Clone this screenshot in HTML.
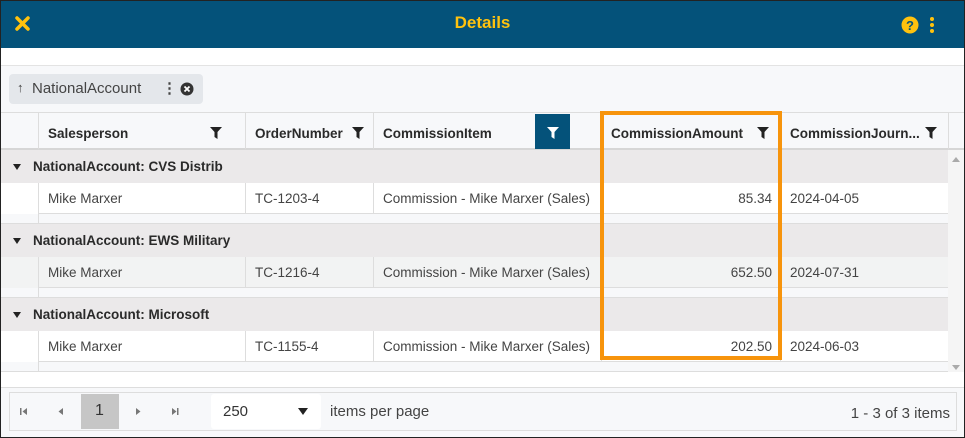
<!DOCTYPE html><html><head><style>
*{box-sizing:border-box;margin:0;padding:0}
body{width:965px;height:438px;overflow:hidden;font-family:"Liberation Sans",sans-serif;background:#fff;position:relative}
.a{position:absolute}
.frame{left:0;top:0;width:965px;height:438px;border:1px solid #222;}
.hdr{left:1px;top:1px;width:963px;height:47px;background:#04527a}
.title{left:0;width:965px;top:13px;text-align:center;color:#ffc20e;font-weight:bold;font-size:17px}
.tb{left:1px;top:65px;width:963px;height:47px;background:#f7f8fa;border-top:1px solid #e3e3e3}
.chip{left:9px;top:74px;width:194px;height:30px;background:#e4e7eb;border-radius:4px;font-size:15px;color:#444}
.th{top:112px;height:38px;background:#f7f8fa;border-top:1px solid #ddd;border-bottom:2px solid #d6d6d6;border-left:1px solid #ddd;font-weight:bold;font-size:13.5px;color:#2a2a2a;padding:13px 0 0 9px;white-space:nowrap}
.f{position:absolute;top:13px}
.g{left:1px;width:947px;height:33px;background:#ebe9ea;font-weight:bold;font-size:13.5px;color:#2a2a2a}
.tri{position:absolute;left:12px;top:14px;width:0;height:0;border-left:4px solid transparent;border-right:4px solid transparent;border-top:6px solid #222}
.d{height:31px;border-left:1px solid #ddd;border-bottom:1px solid #ddd;font-size:13.5px;color:#444;padding:8px 0 0 9px;white-space:nowrap}
.ft{left:1px;width:947px;height:10px;background:#f7f8fa;border-bottom:1px solid #ddd}
</style></head><body>
<div class="a frame"></div>
<div class="a hdr"></div>
<svg class="a" style="left:14px;top:15px" width="17" height="17" viewBox="0 0 17 17"><path d="M3 3L14 14M14 3L3 14" stroke="#ffc20e" stroke-width="3.5" stroke-linecap="round"/></svg>
<div class="a title">Details</div>
<svg class="a" style="left:900px;top:15px" width="40" height="20"><circle cx="10" cy="10" r="8.5" fill="#ffc20e"/><text x="10" y="15" text-anchor="middle" font-family="Liberation Sans" font-weight="bold" font-size="13" fill="#04527a">?</text><circle cx="32" cy="4" r="2" fill="#ffc20e"/><circle cx="32" cy="10" r="2" fill="#ffc20e"/><circle cx="32" cy="16" r="2" fill="#ffc20e"/></svg>
<div class="a tb"></div>
<div class="a chip"><span class="a" style="left:8px;top:6px;font-size:13px">↑</span><span class="a" style="left:23px;top:6px">NationalAccount</span><span class="a" style="left:153px;top:5px;font-weight:bold">⋮</span><svg class="a" style="left:171px;top:8px" width="14" height="14"><circle cx="7" cy="7" r="6.5" fill="#333"/><path d="M4.5 4.5L9.5 9.5M9.5 4.5L4.5 9.5" stroke="#fff" stroke-width="1.8"/></svg></div>

<div class="a th" style="left:1px;width:37px;border-left:none"></div>
<div class="a th" style="left:38px;width:207px">Salesperson<svg class="f" style="left:170px" width="14" height="14"><path d="M1 1H13L8.5 6V13L5.5 11V6Z" fill="#222"/></svg></div>
<div class="a th" style="left:245px;width:128px">OrderNumber<svg class="f" style="left:105px" width="14" height="14"><path d="M1 1H13L8.5 6V13L5.5 11V6Z" fill="#222"/></svg></div>
<div class="a th" style="left:373px;width:228px">CommissionItem<div class="a" style="left:161px;top:1px;width:35px;height:35px;background:#04527a"></div><svg class="f" style="left:172px" width="14" height="14"><path d="M1 1H13L8.5 6V13L5.5 11V6Z" fill="#fff"/></svg></div>
<div class="a th" style="left:601px;width:179px">CommissionAmount<svg class="f" style="left:154px" width="14" height="14"><path d="M1 1H13L8.5 6V13L5.5 11V6Z" fill="#222"/></svg></div>
<div class="a th" style="left:780px;width:168px">CommissionJourn...<svg class="f" style="left:143px" width="14" height="14"><path d="M1 1H13L8.5 6V13L5.5 11V6Z" fill="#222"/></svg></div>
<div class="a th" style="left:948px;width:16px;padding:0"></div>

<div class="a" style="left:948px;top:150px;width:16px;height:222px;background:#f5f5f5"></div>
<div class="a" style="left:952px;top:157px;width:0;height:0;border-left:4px solid transparent;border-right:4px solid transparent;border-bottom:5px solid #aaa"></div>
<div class="a" style="left:952px;top:365px;width:0;height:0;border-left:4px solid transparent;border-right:4px solid transparent;border-top:5px solid #aaa"></div>

<!-- group 1 -->
<div class="a g" style="top:150px"><span class="tri"></span><span class="a" style="left:32px;top:9px">NationalAccount: CVS Distrib</span></div>
<div class="a" style="left:1px;top:183px;width:947px;height:31px;background:#fff"></div>
<div class="a d" style="left:38px;top:183px;width:207px">Mike Marxer</div>
<div class="a d" style="left:245px;top:183px;width:128px">TC-1203-4</div>
<div class="a d" style="left:373px;top:183px;width:228px">Commission - Mike Marxer (Sales)</div>
<div class="a d" style="left:601px;top:183px;width:179px;text-align:right;padding-right:8px">85.34</div>
<div class="a d" style="left:780px;top:183px;width:168px">2024-04-05</div>
<div class="a ft" style="top:214px"></div><div class="a" style="left:38px;top:214px;width:1px;height:10px;background:#ddd"></div>

<!-- group 2 -->
<div class="a g" style="top:224px"><span class="tri"></span><span class="a" style="left:32px;top:9px">NationalAccount: EWS Military</span></div>
<div class="a" style="left:1px;top:257px;width:947px;height:31px;background:#f2f3f3"></div>
<div class="a d" style="left:38px;top:257px;width:207px">Mike Marxer</div>
<div class="a d" style="left:245px;top:257px;width:128px">TC-1216-4</div>
<div class="a d" style="left:373px;top:257px;width:228px">Commission - Mike Marxer (Sales)</div>
<div class="a d" style="left:601px;top:257px;width:179px;text-align:right;padding-right:8px">652.50</div>
<div class="a d" style="left:780px;top:257px;width:168px">2024-07-31</div>
<div class="a ft" style="top:288px"></div><div class="a" style="left:38px;top:288px;width:1px;height:10px;background:#ddd"></div>

<!-- group 3 -->
<div class="a g" style="top:298px"><span class="tri"></span><span class="a" style="left:32px;top:9px">NationalAccount: Microsoft</span></div>
<div class="a" style="left:1px;top:331px;width:947px;height:31px;background:#fff"></div>
<div class="a d" style="left:38px;top:331px;width:207px">Mike Marxer</div>
<div class="a d" style="left:245px;top:331px;width:128px">TC-1155-4</div>
<div class="a d" style="left:373px;top:331px;width:228px">Commission - Mike Marxer (Sales)</div>
<div class="a d" style="left:601px;top:331px;width:179px;text-align:right;padding-right:8px">202.50</div>
<div class="a d" style="left:780px;top:331px;width:168px">2024-06-03</div>
<div class="a ft" style="top:362px"></div><div class="a" style="left:38px;top:362px;width:1px;height:10px;background:#ddd"></div>

<!-- orange highlight -->
<div class="a" style="left:600px;top:111px;width:182px;height:249px;border:4.5px solid #f7940c"></div>

<!-- pager -->
<div class="a" style="left:1px;top:387px;width:963px;height:50px;background:#f7f8fa;border-top:1px solid #ddd"></div>
<div class="a" style="left:9px;top:392px;width:948px;height:39px;border:1px solid #ddd;background:#f7f8fa"></div>
<div class="a" style="left:81px;top:394px;width:38px;height:35px;background:#c6c6c6"></div>
<div class="a" style="left:95px;top:402px;font-size:16px;color:#333">1</div>
<svg class="a" style="left:18px;top:407px" width="180" height="10" fill="#777"><rect x="2" y="1" width="1.5" height="7"/><path d="M9 1V8L4.5 4.5Z"/><path d="M45 1V8L40.5 4.5Z"/><path d="M118 1V8L122.5 4.5Z"/><path d="M154 1V8L158.5 4.5Z"/><rect x="159" y="1" width="1.5" height="7"/></svg>
<div class="a" style="left:211px;top:394px;width:110px;height:35px;background:#fff;border-radius:3px"></div>
<div class="a" style="left:223px;top:403px;font-size:15px;color:#333">250</div>
<div class="a" style="left:298px;top:408px;width:0;height:0;border-left:5px solid transparent;border-right:5px solid transparent;border-top:7px solid #222"></div>
<div class="a" style="left:330px;top:403px;font-size:15px;color:#444">items per page</div>
<div class="a" style="left:760px;top:405px;width:190px;text-align:right;font-size:15px;color:#444">1 - 3 of 3 items</div>
</body></html>
